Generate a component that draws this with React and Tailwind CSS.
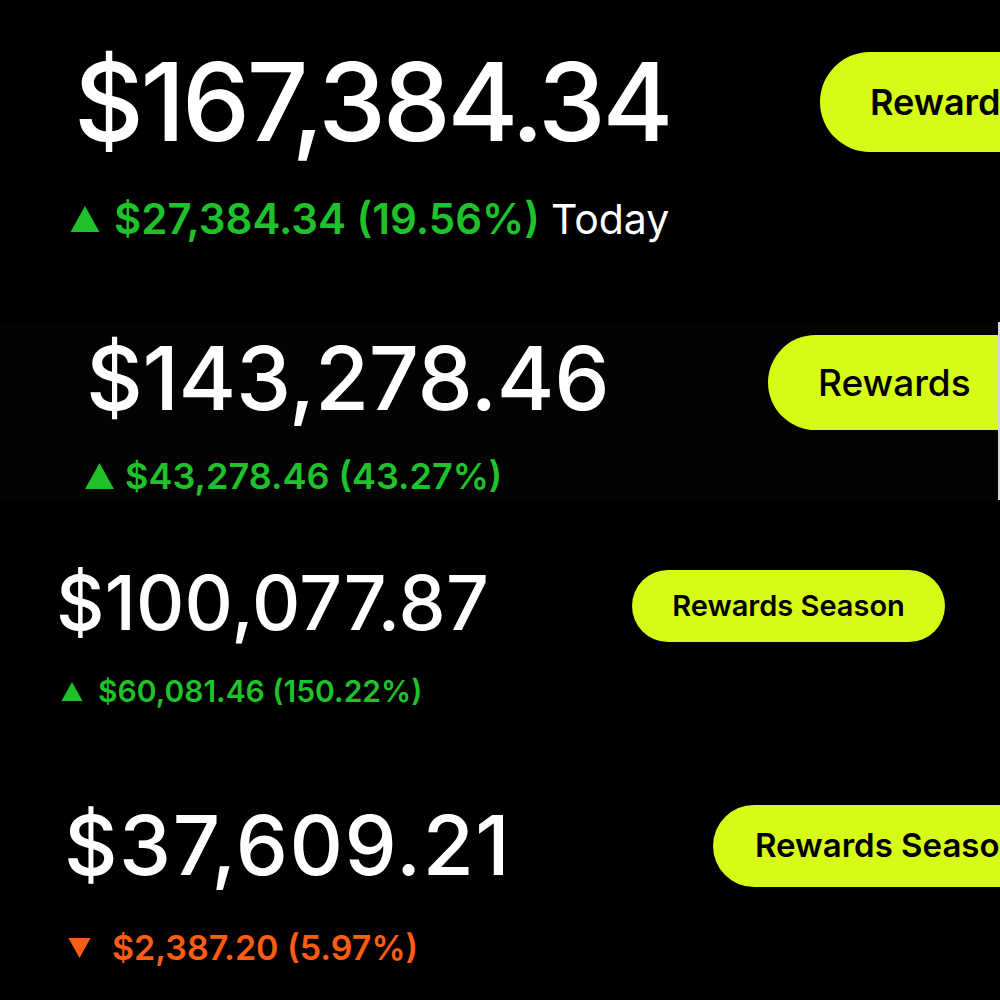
const GREEN = "text-[#1fc22a]";

const Up = ({ w, h, className }) => (
  <svg width={w} height={h} viewBox="0 0 10 9" className={className}>
    <polygon points="5,0 10,9 0,9" fill="#1fc22a" />
  </svg>
);

const Down = ({ w, h, className }) => (
  <svg width={w} height={h} viewBox="0 0 10 9" className={className}>
    <polygon points="0,0 10,0 5,9" fill="#ff5c14" />
  </svg>
);

export default function App() {
  return (
    <div
      className="w-[1000px] h-[1000px] bg-black text-white overflow-hidden flex flex-col"
      style={{ fontFamily: "Inter, 'Liberation Sans', sans-serif" }}
    >
      {/* Panel 1 */}
      <div className="h-[322px] flex overflow-hidden shrink-0">
        <div className="w-[820px] shrink-0 pl-[74px] pt-[48px]">
          <p className="text-[108px] leading-none font-medium tracking-[-3.3px] whitespace-nowrap">$167,384.34</p>
          <div className="flex items-center mt-[42px] -ml-[6px]">
            <Up w={34} h={26} />
            <span className={`${GREEN} text-[42px] leading-none font-semibold ml-[12px] whitespace-nowrap`}>
              $27,384.34 (19.56%)
            </span>
            <span className="text-[41px] leading-none ml-[11px]">Today</span>
          </div>
        </div>
        <div className="mt-[52px] h-[100px] w-[300px] shrink-0 rounded-l-full bg-[#d6fb16] text-black flex items-center pl-[50px]">
          <span className="text-[36px] font-semibold whitespace-nowrap">Rewards Season</span>
        </div>
      </div>

      {/* Panel 2 */}
      <div className="h-[178px] flex overflow-hidden shrink-0 bg-[#030303] border-r-2 border-[#d8d8d8] w-[1000px]">
        <div className="w-[768px] shrink-0 pl-[86px] pt-[12px]">
          <p className="text-[88px] leading-none font-medium tracking-[-0.4px] whitespace-nowrap">$143,278.46</p>
          <div className="flex items-center mt-[36px] -ml-[2px]">
            <Up w={31} h={26} />
            <span className={`${GREEN} text-[36px] leading-none font-semibold ml-[10px] whitespace-nowrap`}>
              $43,278.46 (43.27%)
            </span>
          </div>
        </div>
        <div className="mt-[13px] h-[95px] w-[300px] shrink-0 rounded-l-full bg-[#d6fb16] text-black flex items-center pl-[50px]">
          <span className="text-[37px] font-medium">Rewards</span>
        </div>
      </div>

      {/* Panel 3 */}
      <div className="h-[260px] flex overflow-hidden shrink-0">
        <div className="w-[632px] shrink-0 pl-[56px] pt-[65px]">
          <p className="text-[75px] leading-none font-medium tracking-[0.2px] whitespace-nowrap">$100,077.87</p>
          <div className="flex items-center mt-[36px] ml-[3px]">
            <Up w={26} h={19} />
            <span className={`${GREEN} text-[30px] leading-none font-semibold ml-[13px] whitespace-nowrap`}>
              $60,081.46 (150.22%)
            </span>
          </div>
        </div>
        <div className="mt-[70px] h-[72px] w-[313px] shrink-0 rounded-full bg-[#d6fb16] text-black flex items-center justify-center">
          <span className="text-[29px] font-semibold whitespace-nowrap">Rewards Season</span>
        </div>
      </div>

      {/* Panel 4 */}
      <div className="h-[240px] flex overflow-hidden shrink-0">
        <div className="w-[713px] shrink-0 pl-[64px] pt-[44px]">
          <p className="text-[83px] leading-none font-medium tracking-[1.5px] whitespace-nowrap">$37,609.21</p>
          <div className="flex items-center mt-[44px] ml-[3px]">
            <Down w={25} h={20} />
            <span className="text-[#ff5c14] text-[34px] leading-none font-semibold ml-[20px] whitespace-nowrap">
              $2,387.20 (5.97%)
            </span>
          </div>
        </div>
        <div className="mt-[45px] h-[82px] w-[320px] shrink-0 rounded-l-full bg-[#d6fb16] text-black flex items-center pl-[42px]">
          <span className="text-[33px] font-semibold whitespace-nowrap">Rewards Season</span>
        </div>
      </div>
    </div>
  );
}
